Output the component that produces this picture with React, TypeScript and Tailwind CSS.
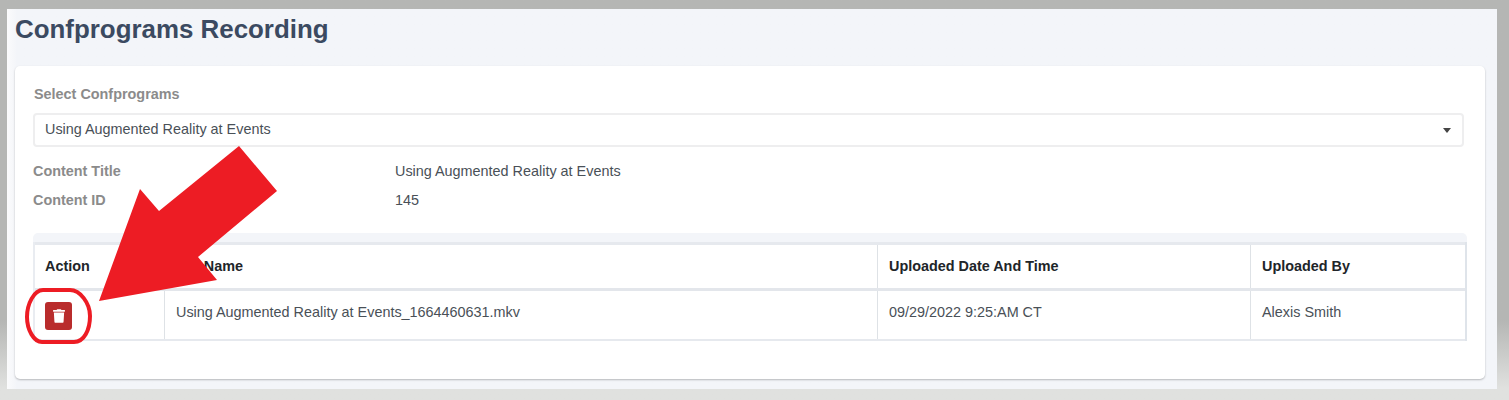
import { FaTrash } from 'react-icons/fa';

const columns = [
  { label: 'Action', width: 'w-[129px] pl-[10px]' },
  { label: 'File Name', width: 'w-[713px] pl-[11px]' },
  { label: 'Uploaded Date And Time', width: 'w-[373px] border-l border-[#dee2e6] pl-[11px]' },
  { label: 'Uploaded By', width: 'flex-1 border-l border-[#dee2e6] pl-[11px]' },
];

export default function App() {
  return (
    <div className="relative h-[400px] w-[1509px] overflow-hidden bg-linear-to-b from-[#b5b6b4] from-80% to-[#e0e1df] to-97% pt-[9px] pr-[12px] pb-[11px] pl-[7px] font-['Liberation_Sans',Arial,sans-serif] text-[14.4px] text-[#495057]">
      <div className="h-[380px] bg-linear-to-r from-[#fbfbfc] to-[#f3f5f9] to-[10px] pt-[5px] pr-[12px] pl-[8px]">
        {/* Titulo */}
        <h1 className="h-[52px] text-[25.9px] leading-[30px] font-bold text-[#3b4a61]">Confprograms Recording</h1>

        {/* Card */}
        <div className="h-[313px] rounded-[5px] bg-white px-[18px] pt-[19px] shadow-[0_1px_2px_rgba(0,0,0,0.25)]">
          <p className="mb-[10px] h-[18px] pl-px leading-[18px] font-bold text-[#8b8b8b]">Select Confprograms</p>

          <div className="flex h-[34px] w-[1431px] items-center justify-between rounded-[4px] border-2 border-[#eeeeef] px-[10px]">
            <span>Using Augmented Reality at Events</span>
            <span className="mr-px h-0 w-0 border-x-[4px] border-t-[5px] border-x-transparent border-t-[#444]" />
          </div>

          <div className="mt-[10px] flex h-[29px] items-center">
            <span className="w-[362px] font-bold text-[#8b8b8b]">Content Title</span>
            <span>Using Augmented Reality at Events</span>
          </div>
          <div className="flex h-[29px] items-center">
            <span className="w-[362px] font-bold text-[#8b8b8b]">Content ID</span>
            <span>145</span>
          </div>

          {/* Tabela */}
          <div className="mt-[18px] w-[1434px] rounded-t-[5px] bg-[#f3f5f9] pt-[9px]">
            <div className="border-x-2 border-r-[#dfe4ea] border-l-[#e9ecf1] bg-white">
              <div className="flex h-[49px] border-y-[3px] border-t-[#e6e9ee] border-b-[#e3e6eb]">
                {columns.map((col) => (
                  <div key={col.label} className={`${col.width} flex items-center font-bold text-[#212529]`}>
                    {col.label}
                  </div>
                ))}
              </div>
              <div className="flex h-[50px] border-b-2 border-[#e6e9ee]">
                <div className="w-[129px] pt-[11px] pl-[10px]">
                  <button className="flex h-[28px] w-[27px] items-center justify-center rounded-[3px] bg-[#b92c2c] text-white">
                    <FaTrash className="h-[14px] w-[12px]" />
                  </button>
                </div>
                <div className="w-[713px] border-l border-[#dee2e6] pt-[11px] pl-[11px]">
                  Using Augmented Reality at Events_1664460631.mkv
                </div>
                <div className="w-[373px] border-l border-[#dee2e6] pt-[11px] pl-[11px]">09/29/2022 9:25:AM CT</div>
                <div className="flex-1 border-l border-[#dee2e6] pt-[11px] pl-[11px]">Alexis Smith</div>
              </div>
            </div>
          </div>
        </div>
      </div>

      {/* Anotacao sobre o print */}
      <svg className="absolute top-0 left-0" width="1509" height="400" viewBox="0 0 1509 400" fill="none">
        <polygon points="99,301 140,189 159,211 239,146 277,191 198,257 217,280" fill="#ed1c24" />
        <path
          d="M43,290 H70 C80,290 90,303 90,316 C90,330 84,342 74,342 H42 C34,342 27,330 27,317 C27,304 34,290 43,290 Z"
          stroke="#ed1c24"
          strokeWidth="4"
        />
      </svg>
    </div>
  );
}
